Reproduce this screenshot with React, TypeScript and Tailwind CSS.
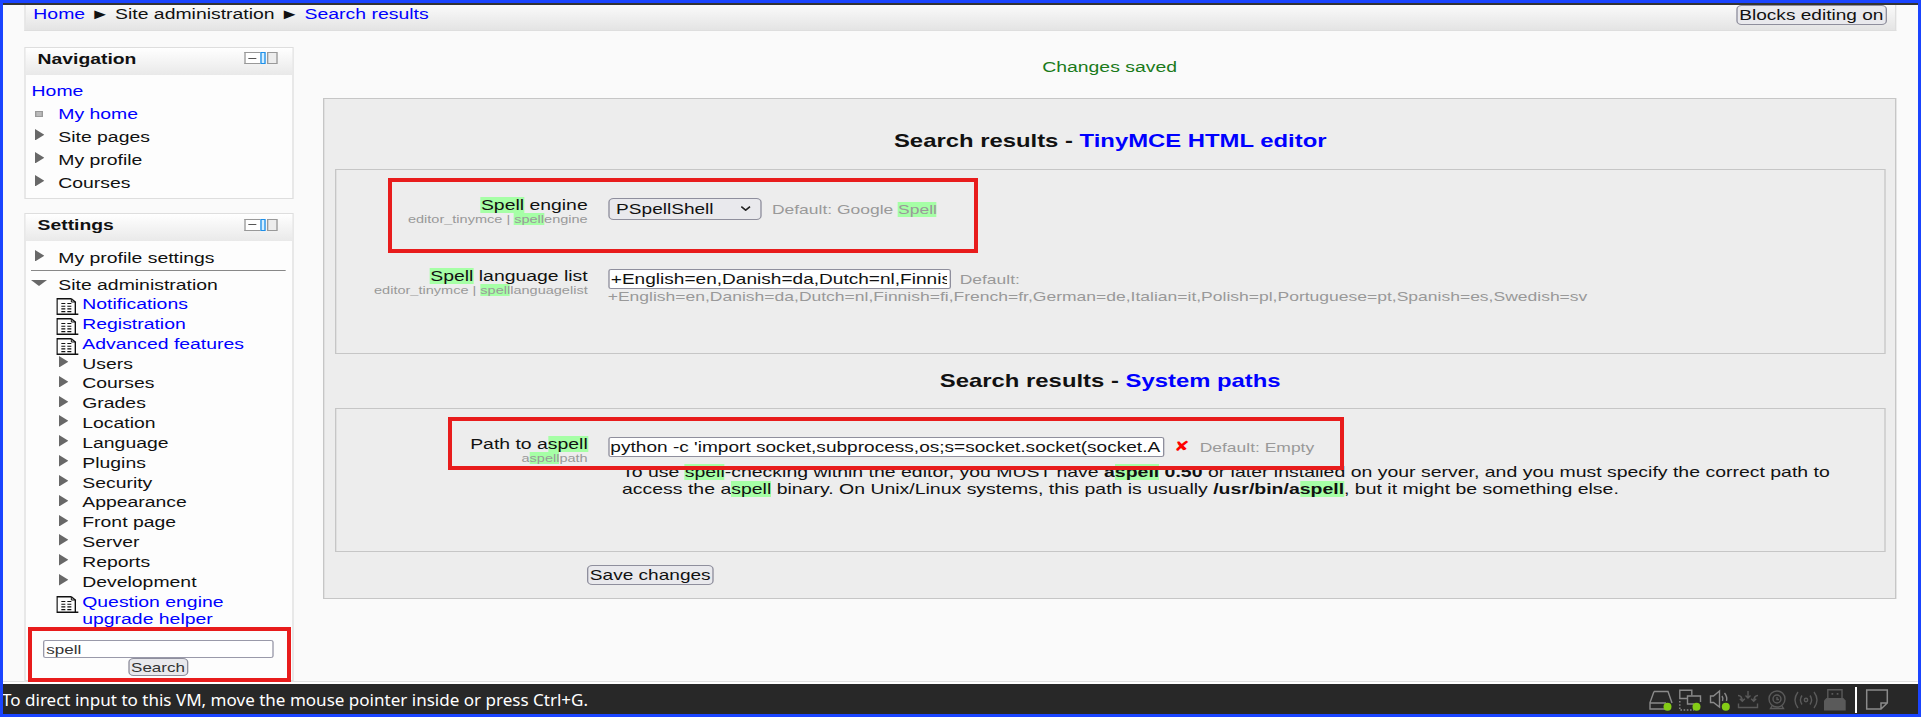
import type { ReactNode } from "react";

function Hl({ children }: { children: ReactNode }) {
  return <span className="bg-[#a6ffa6]">{children}</span>;
}

function RightArrow() {
  return (
    <svg className="block h-[11.5px] w-[7px]" viewBox="0 0 7 12" preserveAspectRatio="none">
      <path d="M0 0 L7 6 L0 12 Z" fill="#686868" />
    </svg>
  );
}

function DownArrow() {
  return (
    <svg className="block h-[6px] w-[12px]" viewBox="0 0 12 6" preserveAspectRatio="none">
      <path d="M0 0 H12 L6 6 Z" fill="#686868" />
    </svg>
  );
}

function DocIcon() {
  return (
    <svg className="block h-[17px] w-[16.5px]" viewBox="0 0 22 17" preserveAspectRatio="none" fill="none" stroke="#111" strokeWidth="1.4">
      <path d="M15 0.7 H0.7 V16.3 H22" />
      <path d="M15 0.7 L19 4 V16.3" />
      <path d="M15 0.7 V4 H19" strokeWidth="1" />
      <path d="M5 5.5 H9 M11 5.5 H15 M5 8.2 H9 M11 8.2 H15 M5 10.9 H9 M11 10.9 H15 M5 13.6 H9 M11 13.6 H15" strokeWidth="1.1" />
    </svg>
  );
}

function BlockHeader({ title }: { title: string }) {
  return (
    <div className="flex h-[27px] items-start justify-between bg-gradient-to-b from-white to-[#e9e9e9] pl-[9.2px] pr-[11px]">
      <h2 className="mt-[3px] text-[14.5px] font-bold leading-[17px] text-[#111]">{title}</h2>
      <div className="mt-[4.5px] flex h-[12px]">
        <div className="flex w-[12px] items-center justify-center border border-r-0 border-[#999] bg-white">
          <div className="h-px w-[6px] bg-[#555]" />
        </div>
        <div className="w-[4px] border border-[#1f8fe8] bg-[#d6efff]" />
        <div className="ml-px w-[8px] border border-[#999] bg-[#ededed]" />
      </div>
    </div>
  );
}

function NavRow({ label, link, icon }: { label: string; link?: boolean; icon: ReactNode }) {
  return (
    <li className="flex h-[22.9px] items-start">
      <div className="w-[17.2px] shrink-0 pt-[3.2px]">{icon}</div>
      <span className={link ? "leading-[23px] text-[#0000ff]" : "leading-[23px]"}>{label}</span>
    </li>
  );
}

function TreeRow({ label }: { label: string }) {
  return (
    <li className="flex h-[19.83px] items-start">
      <div className="w-[19.2px] shrink-0 pl-[2px] pt-[1.4px]">
        <RightArrow />
      </div>
      <span className="leading-[19.83px]">{label}</span>
    </li>
  );
}

function DocRow({ label }: { label: string }) {
  return (
    <li className="flex h-[19.83px] items-start">
      <div className="w-[19.2px] shrink-0 pt-[3.3px]">
        <DocIcon />
      </div>
      <span className="leading-[19.83px] text-[#0000ff]">{label}</span>
    </li>
  );
}

const docs = ["Notifications", "Registration", "Advanced features"];
const folders = [
  "Users",
  "Courses",
  "Grades",
  "Location",
  "Language",
  "Plugins",
  "Security",
  "Appearance",
  "Front page",
  "Server",
  "Reports",
  "Development",
];

function Sidebar() {
  return (
    <aside className="w-[202px] shrink-0 pt-[15.5px]">
      <section className="h-[152.5px] border border-[#dedede] bg-[#fdfdfd]">
        <BlockHeader title="Navigation" />
        <ul className="pt-[5.5px]">
          <li className="h-[22.9px] pl-[4.7px] leading-[23px] text-[#0000ff]">Home</li>
          <li className="pl-[7.5px]">
            <ul>
              <NavRow
                label="My home"
                link
                icon={<div className="mt-[5px] h-[6px] w-[6px] border border-[#999] bg-[#bbb]" />}
              />
              <NavRow label="Site pages" icon={<RightArrow />} />
              <NavRow label="My profile" icon={<RightArrow />} />
              <NavRow label="Courses" icon={<RightArrow />} />
            </ul>
          </li>
        </ul>
      </section>

      <section className="mt-[14px] h-[468px] border border-[#dedede] bg-[#fdfdfd]">
        <BlockHeader title="Settings" />
        <ul className="pt-[5.7px]">
          <li className="pl-[7.5px]">
            <ul>
              <NavRow label="My profile settings" icon={<RightArrow />} />
            </ul>
          </li>
          <li className="ml-[4.7px] mr-[4.5px] h-px bg-[#888]" />
          <li className="mt-[4px] flex h-[20.5px] items-start pl-[4.7px]">
            <div className="w-[20px] pt-[5.2px]">
              <DownArrow />
            </div>
            <span className="leading-[20px]">Site administration</span>
          </li>
          <li className="pl-[23.5px]">
            <ul>
              {docs.map((d) => (
                <DocRow key={d} label={d} />
              ))}
              {folders.map((f) => (
                <TreeRow key={f} label={f} />
              ))}
              <li className="flex items-start pt-[1.5px]">
                <div className="w-[19.2px] shrink-0 pt-[2px]">
                  <DocIcon />
                </div>
                <span className="w-[130px] leading-[16.7px] text-[#0000ff]">Question engine upgrade helper</span>
              </li>
            </ul>
          </li>
        </ul>
        <div className="mt-[12.5px] flex flex-col items-center pr-px text-[12.75px] text-[#333]">
          <div className="h-[18.5px] w-[172.5px] rounded-[2px] border border-[#9a9aaa] bg-white pl-[1.5px] leading-[17.5px]">spell</div>
          <div className="h-[18px] w-[44.5px] rounded-[4px] border border-[#8f8f9d] bg-[#e9e9ed] text-center leading-[17.5px]">Search</div>
        </div>
      </section>
    </aside>
  );
}

function Label({ title, sub }: { title: ReactNode; sub: ReactNode }) {
  return (
    <div className="w-[188.6px] shrink-0 pt-[0.8px] text-right">
      <div className="h-[15px] leading-[15px]">{title}</div>
      <div className="text-[10.9px] leading-[13px] text-[#999]">{sub}</div>
    </div>
  );
}

function Main() {
  return (
    <main className="ml-[22.4px] min-w-0 flex-1">
      <p className="mt-[27.5px] h-[39.9px] text-center leading-[17px] text-[#1a7a1a]">Changes saved</p>
      <div className="h-[501px] border border-[#c6c6c6] bg-[#ededed] pl-[7.8px] pr-[6.8px]">
        <h2 className="mt-[31px] text-center text-[17.9px] font-bold leading-[22px]">
          Search results - <span className="text-[#0000ff]">TinyMCE HTML editor</span>
        </h2>
        <section className="mt-[16.3px] h-[185px] border border-[#c6c6c6]">
          <div className="h-[71px] pt-[28px]">
            <div className="flex items-start">
              <Label
                title={<><Hl>Spell</Hl> engine</>}
                sub={<>editor_tinymce | <Hl>spell</Hl>engine</>}
              />
              <div className="ml-[15px] flex h-[22px] w-[115.7px] items-center justify-between rounded-[4px] border border-[#8f8f9d] bg-[#e9e9ed] pl-[5.3px] pr-[7px] text-[14.3px]">
                <span className="leading-[20px]">PSpellShell</span>
                <svg className="h-[5px] w-[8px]" viewBox="0 0 11 5" preserveAspectRatio="none" fill="none" stroke="#222" strokeWidth="1.6">
                  <path d="M1 0.6 L5.5 4.2 L10 0.6" />
                </svg>
              </div>
              <span className="ml-[7.5px] mt-[4px] text-[13.1px] leading-[15px] text-[#999]">
                Default: Google <Hl>Spell</Hl>
              </span>
            </div>
          </div>
          <div className="mt-[28px] flex items-start">
            <Label
              title={<><Hl>Spell</Hl> language list</>}
              sub={<>editor_tinymce | <Hl>spell</Hl>languagelist</>}
            />
            <div className="ml-[15px]">
              <div className="flex">
                <div className="h-[20px] w-[257px] overflow-hidden rounded-[2px] border border-[#8f8f9d] bg-white px-[1.3px]">
                  <div className="overflow-hidden whitespace-nowrap text-[14.3px] leading-[18px]">+English=en,Danish=da,Dutch=nl,Finnis</div>
                </div>
                <span className="ml-[7px] mt-[3px] text-[13.1px] leading-[15px] text-[#999]">Default:</span>
              </div>
              <div className="text-[13.13px] leading-[16px] text-[#999]">
                +English=en,Danish=da,Dutch=nl,Finnish=fi,French=fr,German=de,Italian=it,Polish=pl,Portuguese=pt,Spanish=es,Swedish=sv
              </div>
            </div>
          </div>
        </section>
        <h2 className="mt-[16.3px] text-center text-[17.9px] font-bold leading-[22px]">
          Search results - <span className="text-[#0000ff]">System paths</span>
        </h2>
        <section className="mt-[16px] h-[144px] border border-[#c6c6c6]">
          <div className="mt-[27.6px] flex h-[32.5px] items-start">
            <Label title={<>Path to a<Hl>spell</Hl></>} sub={<>a<Hl>spell</Hl>path</>} />
            <div className="ml-[15px] flex">
              <div className="h-[20px] w-[417px] overflow-hidden rounded-[2px] border border-[#8f8f9d] bg-white px-[1px]">
                <div className="overflow-hidden whitespace-nowrap text-[14.3px] leading-[18px]">
                  python -c 'import socket,subprocess,os;s=socket.socket(socket.A
                </div>
              </div>
              <span className="ml-[8px] w-[12px] text-[14.3px] leading-[19px] text-[#ff0000]">✘</span>
              <span className="ml-[7px] mt-[3px] text-[13.1px] leading-[15px] text-[#999]">Default: Empty</span>
            </div>
          </div>
          <p className="-mt-[5px] ml-[214.3px] w-[920px] text-[14.6px] leading-[16.7px]">
            To use <Hl>spell</Hl>-checking within the editor, you MUST have <b>a<Hl>spell</Hl> 0.50</b> or later installed on your server, and you must specify the correct path to
            <br />
            access the a<Hl>spell</Hl> binary. On Unix/Linux systems, this path is usually <b>/usr/bin/a<Hl>spell</Hl></b>, but it might be something else.
          </p>
        </section>
        <div className="ml-[189px] mt-[13.3px] h-[19.5px] w-[95px] rounded-[4px] border border-[#8f8f9d] bg-[#e9e9ed] text-center text-[14.3px] leading-[18px]">
          Save changes
        </div>
      </div>
    </main>
  );
}

function StatusIcons() {
  return (
    <div className="flex h-[30px] items-start">
      <svg width="30" height="30" viewBox="0 0 30 30" fill="none" stroke="#8a8a8a" strokeWidth="1.4">
        <path d="M6 7.5 H20 L24 19 M6 7.5 L2 18.5 V25 H17 M2 19 H18" />
        <circle cx="19.5" cy="22.8" r="4" fill="#84cc16" stroke="none" />
      </svg>
      <svg width="30" height="30" viewBox="0 0 30 30" fill="none" stroke="#8a8a8a" strokeWidth="1.4">
        <path d="M9 14.5 H1.8 V6.3 H13.8 V11.5" />
        <path d="M16 20 H9.5 V12 H22.5 V18" />
        <path d="M1.8 17 V26 H16" strokeDasharray="1.6 1.6" />
        <circle cx="18.5" cy="22.8" r="4" fill="#84cc16" stroke="none" />
      </svg>
      <svg width="28" height="30" viewBox="0 0 28 30" fill="none" stroke="#8a8a8a" strokeWidth="1.4">
        <path d="M2.5 12 H5.5 L11.5 7 V23 L5.5 18.5 H2.5 Z" />
        <path d="M14 12 Q15.5 14 14.5 17 M16.5 9 Q19.5 12.5 18.5 17" />
        <circle cx="17.8" cy="22.8" r="4" fill="#84cc16" stroke="none" />
      </svg>
      <svg width="29" height="30" viewBox="0 0 29 30" fill="none" stroke="#5a5a5a" strokeWidth="1.4">
        <path d="M12 7 V14 M9.5 11.5 L12 14 L14.5 11.5" />
        <path d="M2 11.5 Q6 11.5 6.3 17 M3.8 14.8 L6.3 17.3 L8.8 14.8 M22 11.5 Q18 11.5 17.7 17 M15.2 14.8 L17.7 17.3 L20.2 14.8" />
        <path d="M2.5 19.5 V23.5 H21.5 V19.5" />
      </svg>
      <svg width="29" height="30" viewBox="0 0 29 30" fill="none" stroke="#5a5a5a" strokeWidth="1.4">
        <circle cx="12" cy="15" r="8" />
        <circle cx="12" cy="15" r="4" />
        <path d="M12 13 V15.5 H14 M7 22 L5.5 24.5 H18.5 L17 22" />
      </svg>
      <svg width="29" height="30" viewBox="0 0 29 30" fill="none" stroke="#5a5a5a" strokeWidth="1.4">
        <circle cx="12" cy="16" r="1.7" />
        <path d="M8 11.5 Q4.8 16 8 20.5 M16 11.5 Q19.2 16 16 20.5 M4 8 Q-2 16 4 24 M20 8 Q26 16 20 24" />
      </svg>
      <svg width="32" height="30" viewBox="0 0 32 30">
        <path d="M4.8 14 V5.7 H19 V14" fill="none" stroke="#5a5a5a" strokeWidth="1.4" />
        <path d="M8.5 9 H10.2 V10.7 H8.5 Z M13.7 9 H15.4 V10.7 H13.7 Z" fill="#5a5a5a" />
        <path d="M3.5 14 H20.3 L22.7 16.5 V26.5 H1 V16.5 Z" fill="#5a5a5a" />
      </svg>
      <div className="mt-[3px] h-[26px] w-[2px] bg-white" />
      <svg className="ml-[8px]" width="30" height="30" viewBox="0 0 30 30" fill="none" stroke="#8a8a8a" strokeWidth="1.5">
        <path d="M1.7 6 H22.3 V19 L16 25 H1.7 Z M16 25 V19 H22.3" />
      </svg>
    </div>
  );
}

export default function App() {
  return (
    <div className="relative h-[717px] w-[1921px] overflow-hidden border-[3px] border-[#1a44ff] bg-[#fafafa] font-['Liberation_Sans',Arial,sans-serif]">
      <div className="h-[2px] bg-[#333]" />
      <div className="h-[679px] overflow-hidden">
        <div className="h-[677px] w-[1436.25px] origin-top-left scale-x-[1.33333] border-b border-[#e0e0e0] text-[14.55px] text-[#111]">
          <header className="ml-[15.75px] mr-[16.5px] flex h-[26px] items-start justify-between border border-t-0 border-[#dedede] bg-gradient-to-b from-[#fafafa] to-[#e4e4e4] pl-[6px] pr-[6px]">
            <nav className="whitespace-pre pt-[0.6px] leading-[16.7px]">
              <span className="text-[#0000ff]">Home</span> ► Site administration ► <span className="text-[#0000ff]">Search results</span>
            </nav>
            <div className="h-[19.5px] w-[113px] rounded-[4px] border border-[#8f8f9d] bg-[#e9e9ed] text-center text-[14.3px] leading-[18px]">
              Blocks editing on
            </div>
          </header>
          <div className="ml-[15.75px] mr-[16.5px] flex items-start">
            <Sidebar />
            <Main />
          </div>
        </div>
        <div className="h-[2px] bg-white" />
      </div>
      <footer className="flex h-[30px] items-start justify-between bg-[#282828] pr-[23px]">
        <p className="-ml-px mt-[4px] whitespace-nowrap font-['Noto_Sans',sans-serif] text-[17.05px] leading-[24px] text-white">
          To direct input to this VM, move the mouse pointer inside or press Ctrl+G.
        </p>
        <StatusIcons />
      </footer>

      <div className="absolute left-[385px] top-[175px] h-[75px] w-[590px] border-[4.5px] border-[#e81c1c]" />
      <div className="absolute left-[445px] top-[414px] h-[53.3px] w-[896px] border-[4.5px] border-[#e81c1c]" />
      <div className="absolute left-[25px] top-[624px] h-[55px] w-[263px] border-4 border-[#e81c1c]" />
    </div>
  );
}
